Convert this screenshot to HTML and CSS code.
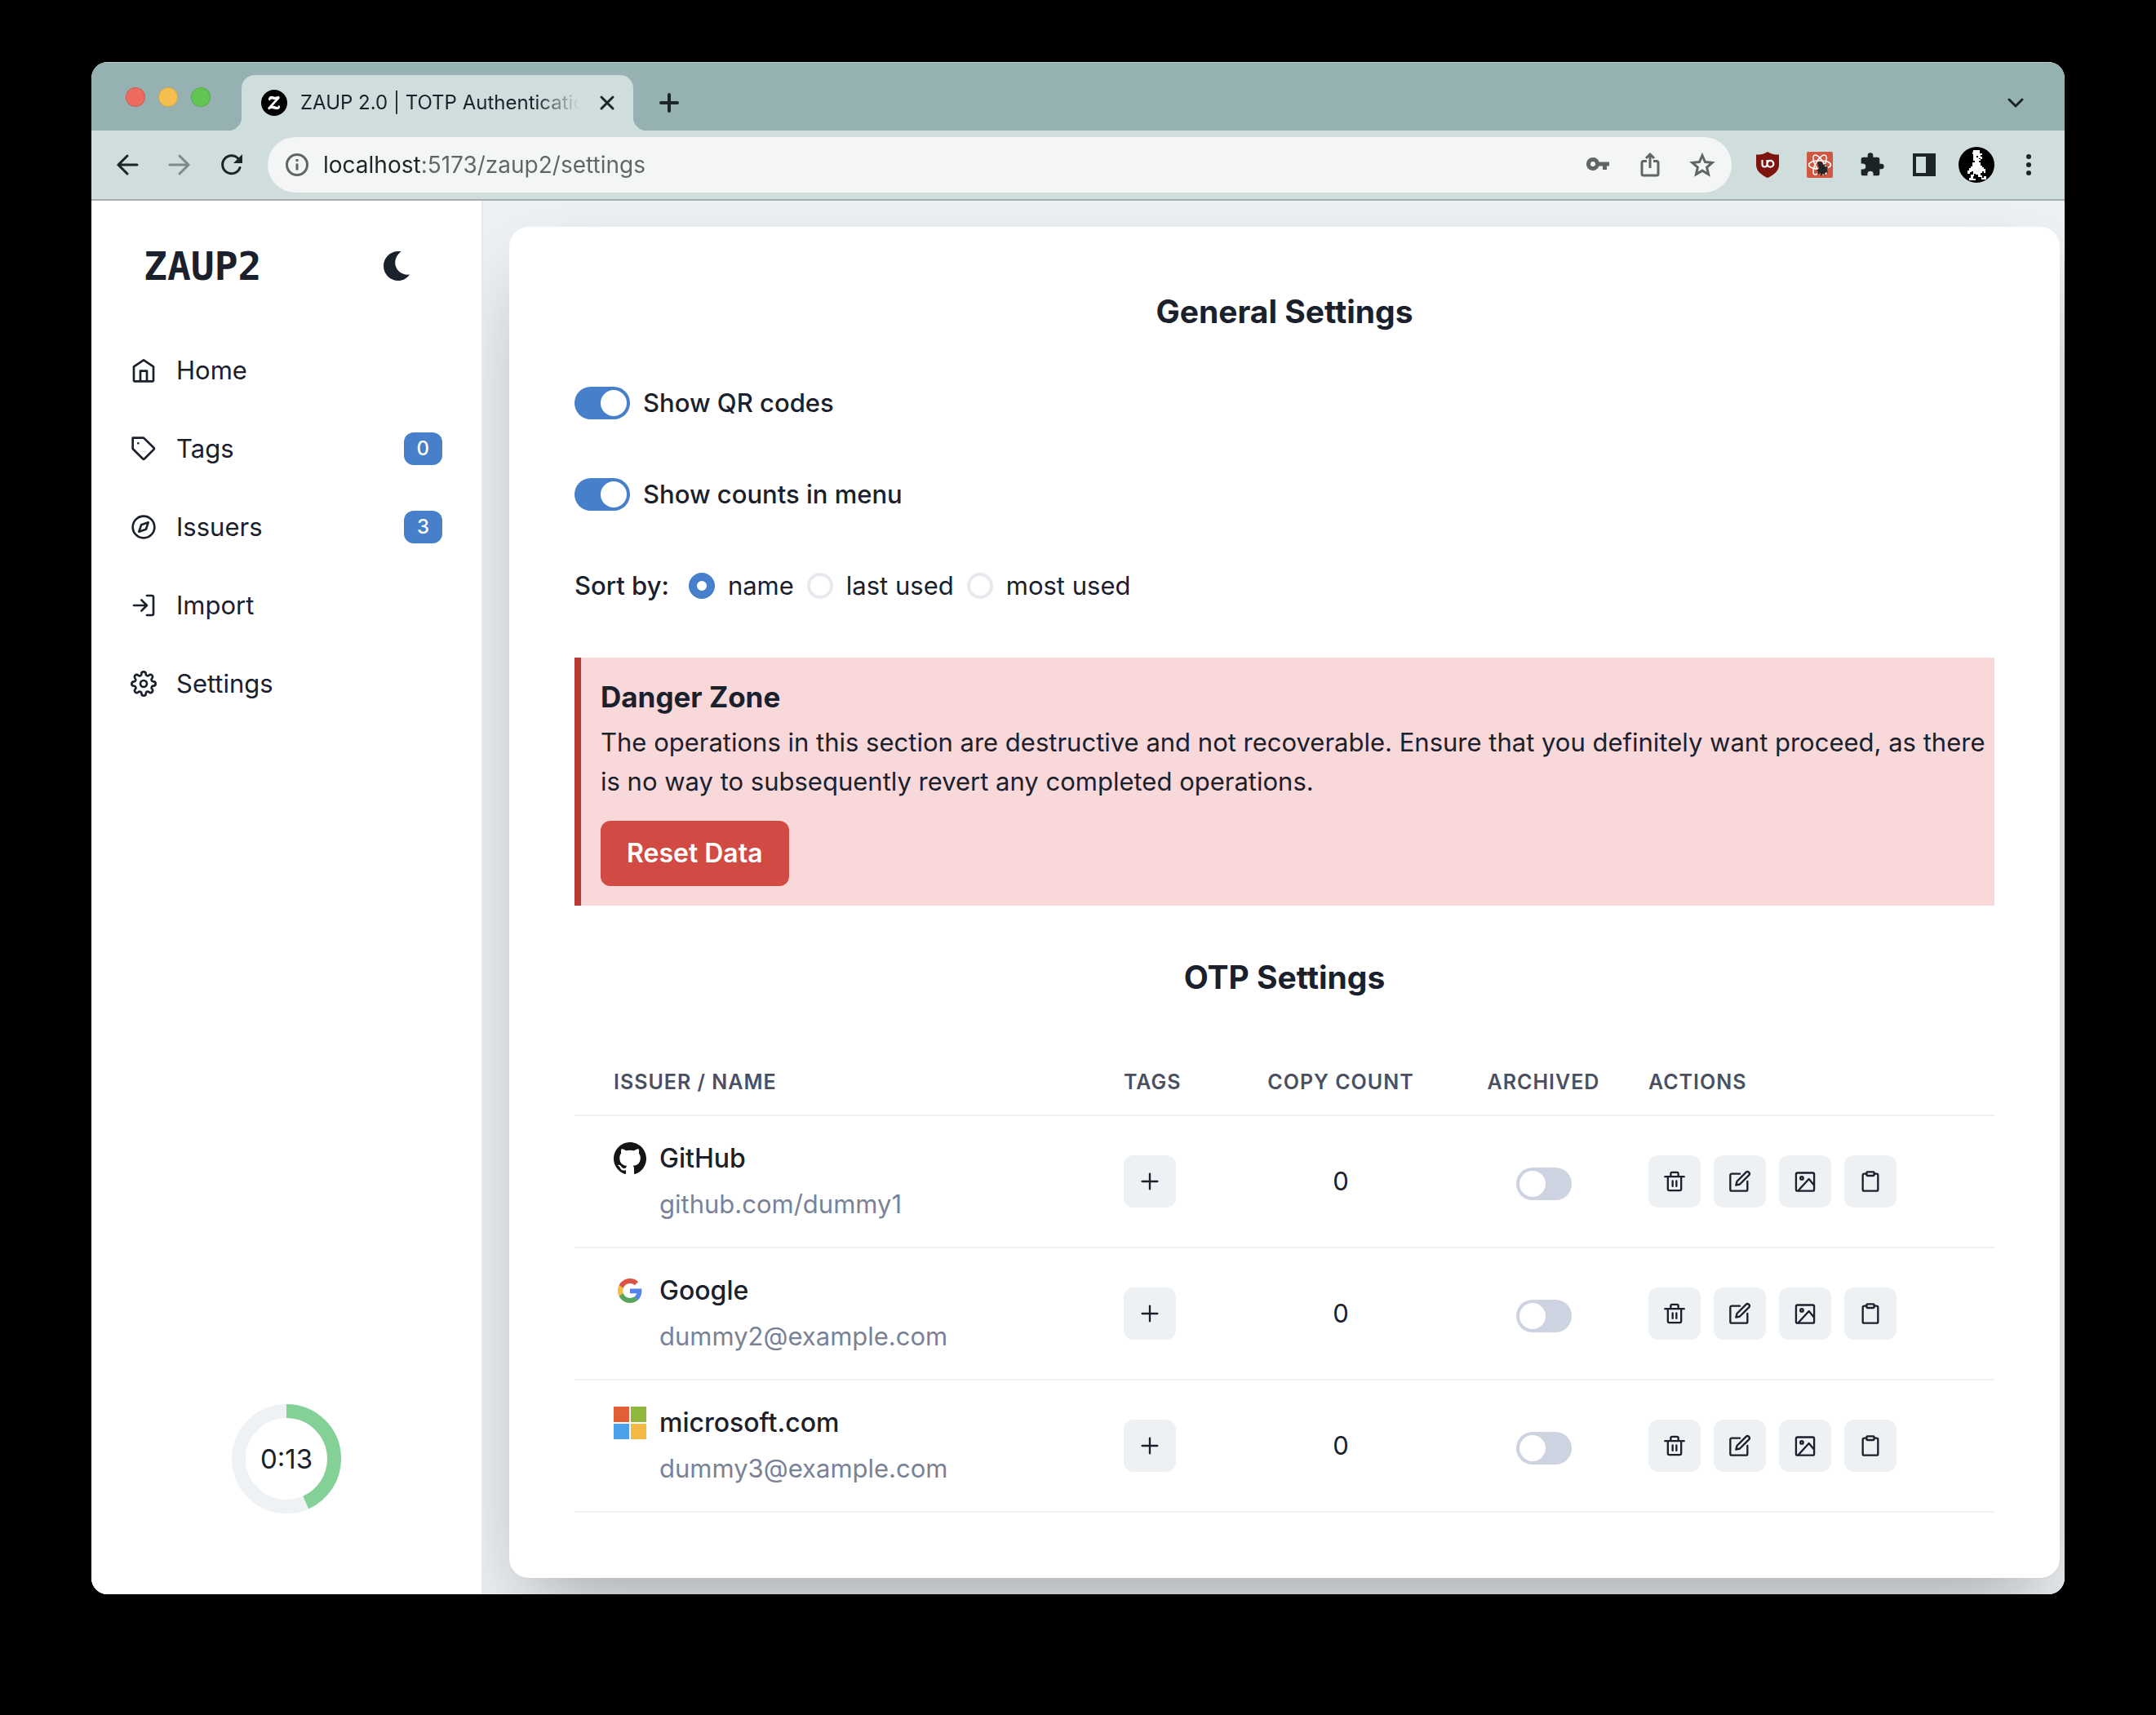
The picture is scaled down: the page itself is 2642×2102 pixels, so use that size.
FILE: index.html
```html
<!DOCTYPE html>
<html lang="en">
<head>
<meta charset="utf-8">
<meta name="viewport" content="width=device-width, initial-scale=1">
<title>ZAUP 2.0 | TOTP Authentication</title>
<link rel="stylesheet" href="styles.css">
</head>
<body>
<svg class="sprite" aria-hidden="true">
  <symbol id="i-trash" viewBox="0 0 24 24"><path d="M2 7h20M19 7v13a1.500 1.500 0 0 1-1.500 1.500h-11A1.500 1.500 0 0 1 5 20V7M8 7V4a1.500 1.500 0 0 1 1.500-1.500h5A1.500 1.500 0 0 1 16 4v3M10 11.500v5.500M14 11.500v5.500"/></symbol>
  <symbol id="i-edit" viewBox="0 0 24 24"><path d="M12 4H3.500A1.500 1.500 0 0 0 2 5.500v15A1.500 1.500 0 0 0 3.500 22h15a1.500 1.500 0 0 0 1.500-1.500V12"/><path d="M18.500 2.500a2.121 2.121 0 0 1 3 3L12 15l-4 1 1-4z"/></symbol>
  <symbol id="i-image" viewBox="0 0 24 24"><rect x="2.500" y="3" width="19" height="19" rx="1.500"/><circle cx="8.500" cy="8.500" r="1.500"/><path d="M21 15.500l-5-6L5 21.500"/></symbol>
  <symbol id="i-clip" viewBox="0 0 24 24"><path d="M16 4h2.500A1.500 1.500 0 0 1 20 5.500v15a1.500 1.500 0 0 1-1.500 1.500h-13A1.500 1.500 0 0 1 4 20.500v-15A1.500 1.500 0 0 1 5.500 4H8"/><rect x="8" y="2" width="8" height="4" rx="1"/></symbol>
  <symbol id="i-plus" viewBox="0 0 24 24"><path d="M12 4v16M4 12h16"/></symbol>
</svg>

<div class="window">
  <header class="tabstrip">
    <div class="lights"><span class="light red"></span><span class="light yellow"></span><span class="light green"></span></div>
    <div class="tab">
      <svg class="favicon" viewBox="0 0 32 32"><circle cx="16" cy="16" r="16" fill="#000"/><path d="M10 8.500c2-1.500 4-.5 6 0s4 0 5.500-1l1.500 2.500-9 10c2.500-.8 4 1.500 6 1 1-.2 1-1 .8-1.800 1.500-.3 2.800.8 2.200 2.500-.8 2.500-4 3-6.500 2s-4.500-1.200-7 .8l-1.500-2 9.500-10.500c-2 .5-3.500-.5-5-.5-1 0-1.500.8-1.200 1.800-1.500.2-2.500-.8-2.300-2.100.2-1.300 1-2.100 2-2.700z" fill="#fff"/></svg>
      <span class="tab-title">ZAUP 2.0 | TOTP Authentication</span>
      <button class="plain" aria-label="Close tab"><svg width="20" height="20" viewBox="0 0 20 20" class="ink w3"><path d="M3 3l14 14M17 3L3 17"/></svg></button>
    </div>
    <button class="plain new-tab" aria-label="New tab"><svg width="28" height="28" viewBox="0 0 28 28" class="ink w4"><path d="M14 4v20M4 14h20"/></svg></button>
    <button class="plain tab-search" aria-label="Search tabs"><svg width="24" height="24" viewBox="0 0 24 24" class="ink w3"><path d="M4 8l8 8 8-8"/></svg></button>
  </header>

  <div class="toolbar">
    <div class="history">
      <button class="plain" aria-label="Back"><svg width="32" height="32" viewBox="0 0 32 32" class="ink w3"><path d="M28 16H5M16 5L5 16l11 11"/></svg></button>
      <button class="plain faded" aria-label="Forward"><svg width="32" height="32" viewBox="0 0 32 32" class="ink w3"><path d="M4 16h23M16 5l11 11-11 11"/></svg></button>
      <button class="plain" aria-label="Reload"><svg width="32" height="32" viewBox="0 0 32 32" class="ink w3"><path d="M26 19.500A11 11 0 1 1 24 8.500"/><path d="M29 3v11H18z" fill="#1d2427" stroke="none"/></svg></button>
    </div>
    <div class="omnibox">
      <svg width="32" height="32" viewBox="0 0 32 32" class="gray"><circle cx="16" cy="16" r="12.500"/><path d="M16 14.500v8M16 9v3"/></svg>
      <input class="url" type="text" value="localhost:5173/zaup2/settings" aria-label="Address">
      <button class="plain" aria-label="Passwords"><svg width="32" height="32" viewBox="0 0 32 32"><path fill-rule="evenodd" fill="#5f6666" d="M10 7a8 8 0 1 0 7.500 10.500H22V22h5v-4.500h3v-5H17.500A8 8 0 0 0 10 7zm0 5a3 3 0 1 1 0 6 3 3 0 0 1 0-6z"/></svg></button>
      <button class="plain" aria-label="Share"><svg width="32" height="32" viewBox="0 0 32 32" class="gray"><path d="M12 11.500H8a2 2 0 0 0-2 2V27a2 2 0 0 0 2 2h16a2 2 0 0 0 2-2V13.500a2 2 0 0 0-2-2h-4M16 20V4M11 8l5-5 5 5"/></svg></button>
      <button class="plain" aria-label="Bookmark"><svg width="32" height="32" viewBox="0 0 32 32" class="gray"><path stroke-linejoin="miter" d="M16 4.500l3.500 8 8.700.8-6.600 5.800 2 8.600-7.600-4.600-7.600 4.600 2-8.600-6.600-5.800 8.700-.8z"/></svg></button>
    </div>
    <div class="extensions">
      <button class="plain" aria-label="uBlock Origin"><svg width="28" height="32" viewBox="0 0 28 32"><path d="M14 0c4 3 9 3.600 14 3.600V16c0 8-7 12.500-14 16C7 28.500 0 24 0 16V3.600C5 3.600 10 3 14 0z" fill="#7d150e"/><path d="M7.500 10v5.500a3 3 0 0 0 6 0V10M13.500 14.700a3.900 3.900 0 1 0 3.900-3.900 3.900 3.900 0 0 0-3.900 3.900" fill="none" stroke="#fff" stroke-width="2.200"/></svg></button>
      <button class="plain" aria-label="React Developer Tools"><svg width="32" height="32" viewBox="0 4 32 32"><rect y="4" width="32" height="32" rx="2" fill="#cf5843"/><g fill="none" stroke="#fff" stroke-width="1.500"><ellipse cx="16" cy="20" rx="13.500" ry="5.200"/><ellipse cx="16" cy="20" rx="13.500" ry="5.200" transform="rotate(60 16 20)"/><ellipse cx="16" cy="20" rx="13.500" ry="5.200" transform="rotate(120 16 20)"/></g><path fill="#252525" d="M13 17l3-1 3 1 1 3 3-1-1 3 4 1-1 3 1 5-2-2-2 1 1 4-3-3-3 3v-4l-4 2 1-4-2-1 3-3-1-3z"/></svg></button>
      <button class="plain" aria-label="Extensions"><svg width="32" height="32" viewBox="0 0 24 24"><path fill="#1d2427" d="M20.500 11H19V7a2 2 0 0 0-2-2h-4V3.500a2.500 2.500 0 0 0-5 0V5H4a2 2 0 0 0-2 2v3.800h1.500a2.700 2.700 0 0 1 0 5.400H2V20a2 2 0 0 0 2 2h3.800v-1.500a2.700 2.700 0 0 1 5.400 0V22H17a2 2 0 0 0 2-2v-4h1.500a2.500 2.500 0 0 0 0-5z"/></svg></button>
      <button class="plain" aria-label="Side panel"><svg width="32" height="32" viewBox="0 0 32 32"><path fill-rule="evenodd" fill="#1d2427" d="M2 2h28v28H2zM6 6v20h12V6z"/></svg></button>
      <button class="plain" aria-label="Profile"><svg width="44" height="44" viewBox="0 0 44 44"><circle cx="22" cy="22" r="22" fill="#000"/><path fill="#fff" d="M18 4h8v4h3v2h-2v2h2v3h-2v2h-2v2h2v4h2v2h2v2h2v5h-2v-2h-2v2h-2v3h2v3h2v-2h3v4h-6v-3h-4v-3h-3v-1h-2v3h-1v3h3v2h-8v-3h2v-4h3v-4h-2v1h-2v2h-3v-4h2v-3h2v-2h2v-5h3v-2h-2v-8h-1z"/><path d="M22 11h2v2h-2zM25 14h2v1h-2z" fill="#000"/></svg></button>
      <button class="plain" aria-label="Menu"><svg width="32" height="32" viewBox="0 0 32 32" fill="#1d2427"><circle cx="16" cy="6" r="3"/><circle cx="16" cy="16" r="3"/><circle cx="16" cy="26" r="3"/></svg></button>
    </div>
  </div>

  <div class="app">
    <aside class="sidebar">
      <div class="brand">
        <span class="logo">ZAUP2</span>
        <button class="plain" aria-label="Toggle colour mode"><svg width="36" height="40" viewBox="-2 -2 36 40"><path fill="#1a202c" d="M21.600 0C15.500 5 13.500 11 14.500 17c2 8 9 12.500 17.500 11.500C28.500 33.500 23.500 36 18 36 8 36 0 28 0 18S8 0 18 0c1.200 0 2.400-.1 3.600 0z"/></svg></button>
      </div>
      <nav class="nav">
        <a href="#home"><svg class="icon" viewBox="0 0 24 24"><path d="M3 8.500L12 2.500l9 6V21a1 1 0 0 1-1 1H4a1 1 0 0 1-1-1zM9 22v-9.500h6V22"/></svg>Home</a>
        <a href="#tags"><svg class="icon" viewBox="0 0 24 24"><path d="M21.500 12.500l-8.700 8.700a1.200 1.200 0 0 1-1.600 0L2 12V2h10l9.500 9.200a1 1 0 0 1 0 1.300zM7 7h.01"/></svg>Tags<span class="badge">0</span></a>
        <a href="#issuers"><svg class="icon" viewBox="0 0 24 24"><circle cx="12" cy="12" r="10"/><path d="M16.240 7.760l-2.120 6.360-6.360 2.120 2.120-6.360z"/></svg>Issuers<span class="badge">3</span></a>
        <a href="#import"><svg class="icon" viewBox="0 0 24 24"><path d="M15 3h4.500A1.500 1.500 0 0 1 21 4.500v15a1.500 1.500 0 0 1-1.500 1.500H15M10 17l5-5-5-5M15 12H3"/></svg>Import</a>
        <a href="#settings"><svg class="icon" viewBox="0 0 24 24"><circle cx="12" cy="12" r="3"/><path d="M19.400 15a1.650 1.650 0 0 0 .33 1.820l.06.06a2 2 0 0 1 0 2.830 2 2 0 0 1-2.830 0l-.06-.06a1.650 1.650 0 0 0-1.820-.33 1.650 1.650 0 0 0-1 1.510V21a2 2 0 0 1-2 2 2 2 0 0 1-2-2v-.09A1.650 1.650 0 0 0 9 19.400a1.650 1.650 0 0 0-1.820.33l-.06.06a2 2 0 0 1-2.830 0 2 2 0 0 1 0-2.830l.06-.06a1.650 1.650 0 0 0 .33-1.820 1.650 1.650 0 0 0-1.510-1H3a2 2 0 0 1-2-2 2 2 0 0 1 2-2h.09A1.650 1.650 0 0 0 4.600 9a1.650 1.650 0 0 0-.33-1.820l-.06-.06a2 2 0 0 1 0-2.830 2 2 0 0 1 2.830 0l.06.06a1.650 1.650 0 0 0 1.820.33H9a1.650 1.650 0 0 0 1-1.510V3a2 2 0 0 1 2-2 2 2 0 0 1 2 2v.09a1.650 1.650 0 0 0 1 1.510 1.650 1.650 0 0 0 1.820-.33l.06-.06a2 2 0 0 1 2.830 0 2 2 0 0 1 0 2.830l-.06.06a1.650 1.650 0 0 0-.33 1.820V9a1.650 1.650 0 0 0 1.510 1H21a2 2 0 0 1 2 2 2 2 0 0 1-2 2h-.09a1.650 1.650 0 0 0-1.510 1z"/></svg>Settings</a>
      </nav>
      <div class="timer">
        <svg viewBox="0 0 134 134" aria-hidden="true"><g fill="none" stroke-width="17" transform="rotate(-90 67 67)"><circle cx="67" cy="67" r="58.500" stroke="#eef2f4"/><circle cx="67" cy="67" r="58.500" stroke="#84d197" pathLength="30" stroke-dasharray="13 17"/></g></svg>
        <span>0:13</span>
      </div>
    </aside>

    <main class="main">
      <div class="card">
        <h2>General Settings</h2>
        <label class="setting"><input type="checkbox" class="switch" checked>Show QR codes</label>
        <label class="setting"><input type="checkbox" class="switch" checked>Show counts in menu</label>
        <div class="setting sort" role="radiogroup" aria-labelledby="sort-label">
          <span id="sort-label">Sort by:</span>
          <label><input type="radio" name="sort" checked>name</label>
          <label><input type="radio" name="sort">last used</label>
          <label><input type="radio" name="sort">most used</label>
        </div>
        <section class="danger">
          <h3>Danger Zone</h3>
          <p>The operations in this section are destructive and not recoverable. Ensure that you definitely want proceed, as there is no way to subsequently revert any completed operations.</p>
          <button class="reset">Reset Data</button>
        </section>
        <h2>OTP Settings</h2>
        <table>
          <thead>
            <tr><th class="c-name">Issuer / Name</th><th class="c-tags">Tags</th><th class="c-count">Copy count</th><th class="c-arch">Archived</th><th class="c-act">Actions</th></tr>
          </thead>
          <tbody>
            <tr>
              <td class="c-name"><div class="account"><svg class="mark" viewBox="0 0 16 16"><path fill="#161514" d="M8 0C3.580 0 0 3.580 0 8c0 3.540 2.290 6.530 5.470 7.590.4.070.55-.17.55-.38 0-.19-.01-.82-.01-1.490-2.010.37-2.530-.49-2.690-.94-.09-.23-.48-.94-.82-1.130-.28-.15-.68-.52-.01-.53.63-.01 1.080.58 1.230.82.72 1.210 1.870.87 2.330.66.07-.52.28-.87.51-1.070-1.780-.2-3.640-.89-3.640-3.950 0-.87.31-1.590.82-2.150-.08-.2-.36-1.020.08-2.120 0 0 .67-.21 2.200.82.64-.18 1.320-.27 2-.27s1.360.09 2 .27c1.530-1.040 2.200-.82 2.200-.82.44 1.100.16 1.920.08 2.120.51.56.82 1.270.82 2.150 0 3.070-1.870 3.750-3.650 3.950.29.25.54.73.54 1.480 0 1.070-.01 1.930-.01 2.200 0 .21.15.46.55.38A8.010 8.010 0 0 0 16 8c0-4.420-3.580-8-8-8z"/></svg><span class="issuer">GitHub</span><span class="user">github.com/dummy1</span></div></td>
              <td class="c-tags"><button class="tool" aria-label="Add tag"><svg><use href="#i-plus"/></svg></button></td>
              <td class="c-count">0</td>
              <td class="c-arch"><input type="checkbox" class="switch" aria-label="Archive GitHub"></td>
              <td class="c-act"><div class="tools"><button class="tool" aria-label="Delete"><svg><use href="#i-trash"/></svg></button><button class="tool" aria-label="Edit"><svg><use href="#i-edit"/></svg></button><button class="tool" aria-label="QR image"><svg><use href="#i-image"/></svg></button><button class="tool" aria-label="Copy"><svg><use href="#i-clip"/></svg></button></div></td>
            </tr>
            <tr>
              <td class="c-name"><div class="account"><svg class="mark" viewBox="-8 -8 64 64"><path fill="#dc5245" d="M24 9.500c3.540 0 6.710 1.220 9.210 3.600l6.850-6.850C35.900 2.380 30.470 0 24 0 14.620 0 6.510 5.380 2.560 13.220l7.980 6.190C12.430 13.720 17.740 9.500 24 9.500z"/><path fill="#5483ec" d="M46.980 24.550c0-1.570-.15-3.090-.38-4.550H24v9.020h12.940c-.58 2.960-2.260 5.480-4.780 7.180l7.730 6c4.510-4.180 7.090-10.360 7.090-17.650z"/><path fill="#f2bd42" d="M10.530 28.590c-.48-1.450-.76-2.990-.76-4.590s.27-3.140.76-4.590l-7.980-6.190C.92 16.460 0 20.120 0 24c0 3.880.92 7.540 2.560 10.780l7.970-6.190z"/><path fill="#58a65c" d="M24 48c6.480 0 11.930-2.130 15.890-5.810l-7.730-6c-2.150 1.450-4.920 2.300-8.160 2.300-6.260 0-11.570-4.220-13.470-9.910l-7.980 6.190C6.510 42.620 14.620 48 24 48z"/></svg><span class="issuer">Google</span><span class="user">dummy2@example.com</span></div></td>
              <td class="c-tags"><button class="tool" aria-label="Add tag"><svg><use href="#i-plus"/></svg></button></td>
              <td class="c-count">0</td>
              <td class="c-arch"><input type="checkbox" class="switch" aria-label="Archive Google"></td>
              <td class="c-act"><div class="tools"><button class="tool" aria-label="Delete"><svg><use href="#i-trash"/></svg></button><button class="tool" aria-label="Edit"><svg><use href="#i-edit"/></svg></button><button class="tool" aria-label="QR image"><svg><use href="#i-image"/></svg></button><button class="tool" aria-label="Copy"><svg><use href="#i-clip"/></svg></button></div></td>
            </tr>
            <tr>
              <td class="c-name"><div class="account"><svg class="mark" viewBox="0 0 40 40"><path fill="#e25f36" d="M0 0h19v19H0z"/><path fill="#8fb73b" d="M21 0h19v19H21z"/><path fill="#4ba0e8" d="M0 21h19v19H0z"/><path fill="#f5b945" d="M21 21h19v19H21z"/></svg><span class="issuer">microsoft.com</span><span class="user">dummy3@example.com</span></div></td>
              <td class="c-tags"><button class="tool" aria-label="Add tag"><svg><use href="#i-plus"/></svg></button></td>
              <td class="c-count">0</td>
              <td class="c-arch"><input type="checkbox" class="switch" aria-label="Archive microsoft.com"></td>
              <td class="c-act"><div class="tools"><button class="tool" aria-label="Delete"><svg><use href="#i-trash"/></svg></button><button class="tool" aria-label="Edit"><svg><use href="#i-edit"/></svg></button><button class="tool" aria-label="QR image"><svg><use href="#i-image"/></svg></button><button class="tool" aria-label="Copy"><svg><use href="#i-clip"/></svg></button></div></td>
            </tr>
          </tbody>
        </table>
      </div>
    </main>
  </div>
</div>
</body>
</html>
```
FILE: styles.css
```css
*, *::before, *::after { box-sizing: border-box; }
body {
  margin: 0;
  padding: 76px 112px 148px;
  background: #000;
  color: #1a202c;
  font: 400 31px/48px Inter, "Liberation Sans", sans-serif;
}
button, input { font: inherit; color: inherit; margin: 0; }
svg { display: block; flex: none; }
.sprite { display: none; }
.plain { display: flex; padding: 0; border: 0; background: none; }
.ink { fill: none; stroke: #1d2427; stroke-linecap: round; }
.w3 { stroke-width: 3; }
.w4 { stroke-width: 4; }
.gray { fill: none; stroke: #5f6666; stroke-width: 3; }

.window { border-radius: 20px; overflow: hidden; background: #fff; }

/* Browser chrome */
.tabstrip {
  display: flex;
  align-items: flex-end;
  height: 84px;
  padding-right: 48px;
  background: #96b1b1;
  border-top: 1px solid #c3d3d1;
}
.lights { display: flex; gap: 16px; align-self: center; margin-left: 42px; }
.light { width: 24px; height: 24px; border-radius: 50%; border: 1px solid rgb(0 0 0 / 12%); }
.red { background: #ec6a5e; }
.yellow { background: #f4bf4f; }
.green { background: #61c554; }
.tab {
  position: relative;
  display: flex;
  align-items: center;
  width: 480px;
  height: 68px;
  margin-left: 38px;
  padding: 0 22px 0 24px;
  border-radius: 16px 16px 0 0;
  background: #cfdddc;
}
.tab::before, .tab::after {
  content: "";
  position: absolute;
  bottom: 0;
  width: 16px;
  height: 16px;
}
.tab::before { right: 100%; background: radial-gradient(circle at 0 0, transparent 16px, #cfdddc 16px); }
.tab::after { left: 100%; background: radial-gradient(circle at 100% 0, transparent 16px, #cfdddc 16px); }
.favicon { width: 32px; height: 32px; }
.tab-title {
  flex: 1;
  margin: 0 24px 0 16px;
  overflow: hidden;
  white-space: nowrap;
  font-size: 24px;
  line-height: 32px;
  mask-image: linear-gradient(90deg, #000 84%, transparent);
}
.new-tab { margin: 0 0 20px 30px; }
.tab-search { margin: 0 0 22px auto; }

.toolbar {
  display: flex;
  align-items: center;
  height: 86px;
  padding: 0 28px;
  background: #cfdddc;
  border-bottom: 2px solid #a3afaf;
}
.history { display: flex; gap: 32px; margin-right: 28px; }
.faded { opacity: 0.45; }
.omnibox {
  flex: 1;
  display: flex;
  align-items: center;
  gap: 32px;
  height: 68px;
  padding: 0 20px;
  border-radius: 34px;
  background: #f3f6f5;
}
.url {
  flex: 1;
  min-width: 0;
  height: 40px;
  margin-left: -16px;
  padding: 0;
  border: 0;
  outline: 0;
  font-size: 28px;
  color: #5f6666;
  background: linear-gradient(90deg, #1d2427 120px, #5f6666 120px);
  -webkit-background-clip: text;
  background-clip: text;
  -webkit-text-fill-color: transparent;
}
.extensions { display: flex; align-items: center; gap: 32px; margin-left: 28px; }
.extensions .plain { width: 32px; justify-content: center; }

/* Application */
.app { display: flex; background: #edf1f4; }
.sidebar {
  display: flex;
  flex-direction: column;
  flex: none;
  width: 480px;
  background: #fff;
  border-right: 2px solid #e2e8ec;
}
.brand {
  display: flex;
  align-items: center;
  justify-content: space-between;
  height: 160px;
  padding: 0 86px 0 64px;
}
.logo { font: 700 48px/56px "DejaVu Sans Mono", monospace; }
.nav { display: flex; flex-direction: column; }
.nav a {
  display: flex;
  align-items: center;
  height: 96px;
  padding: 0 48px;
  color: inherit;
  text-decoration: none;
}
.icon {
  width: 32px;
  height: 32px;
  margin-right: 24px;
  fill: none;
  stroke: currentColor;
  stroke-width: 2;
  stroke-linecap: round;
  stroke-linejoin: round;
}
.badge {
  margin-left: auto;
  padding: 0 16px;
  border-radius: 12px;
  background: #4780ca;
  color: #fff;
  font-size: 24px;
  font-weight: 500;
  line-height: 40px;
}
.timer {
  display: grid;
  place-items: center;
  width: 134px;
  margin: auto auto 99px 172px;
  font-size: 33px;
}
.timer > * { grid-area: 1 / 1; }
.timer svg { width: 100%; }

.main { flex: 1; min-width: 0; padding: 32px 6px 20px 32px; overflow: hidden; }
.card {
  display: flex;
  flex-direction: column;
  gap: 64px;
  padding: 80px;
  border-radius: 24px;
  background: #fff;
  box-shadow: 0 50px 100px -24px rgb(0 0 0 / 30%);
}
h2, h3, p { margin: 0; }
h2 { font-size: 39px; font-weight: 700; text-align: center; }
h3 { font-size: 35px; font-weight: 700; }
.setting { display: flex; align-items: center; gap: 16px; font-weight: 500; }
.sort { font-weight: 400; }
.sort > span { font-weight: 500; margin-right: 8px; }
.sort label { display: flex; align-items: center; gap: 16px; }

.switch {
  appearance: none;
  display: inline-block;
  vertical-align: middle;
  width: 68px;
  height: 40px;
  padding: 4px;
  border-radius: 20px;
  background: #cdd3e0;
}
.switch::before {
  content: "";
  display: block;
  width: 32px;
  height: 32px;
  border-radius: 50%;
  background: #fff;
}
.switch:checked { background: #4780ca; }
.switch:checked::before { margin-left: auto; }
input[type="radio"] {
  appearance: none;
  width: 32px;
  height: 32px;
  border: 4px solid #e6e9ee;
  border-radius: 50%;
  background: #fff;
}
input[type="radio"]:checked { border: 10px solid #4780ca; }

.danger {
  padding: 24px 0 24px 24px;
  border-left: 8px solid #b83a34;
  background: #f8d8d9;
}
.danger p { margin: 8px 0 24px; }
.reset {
  display: block;
  height: 80px;
  padding: 0 32px;
  border: 0;
  border-radius: 12px;
  background: #d24a44;
  color: #fff;
  font-size: 32px;
  font-weight: 600;
}

table { width: 100%; border-collapse: separate; border-spacing: 0; table-layout: fixed; }
th, td { padding: 0; text-align: left; border-bottom: 2px solid #edf0f2; }
th {
  height: 82px;
  color: #4a5060;
  font-size: 25px;
  font-weight: 600;
  line-height: 32px;
  letter-spacing: 1px;
  text-transform: uppercase;
}
td { height: 162px; }
.c-name { padding-left: 48px; }
.c-tags { width: 178px; padding-left: 48px; }
.c-count { width: 272px; text-align: center; }
.c-arch { width: 225px; text-align: center; }
.c-act { width: 440px; padding-left: 16px; }
.account {
  display: grid;
  grid-template-columns: 40px 1fr;
  gap: 8px 16px;
  align-items: center;
}
.mark { width: 40px; height: 40px; }
.issuer { font-size: 32px; font-weight: 500; }
.user { grid-column: 2; color: #7a8296; }
.tools { display: flex; gap: 16px; }
.tool {
  display: flex;
  align-items: center;
  justify-content: center;
  width: 64px;
  height: 64px;
  padding: 0;
  border: 0;
  border-radius: 12px;
  background: #edf1f4;
}
.tool svg {
  width: 28px;
  height: 28px;
  fill: none;
  stroke: currentColor;
  stroke-width: 2;
  stroke-linecap: round;
  stroke-linejoin: round;
}
```
